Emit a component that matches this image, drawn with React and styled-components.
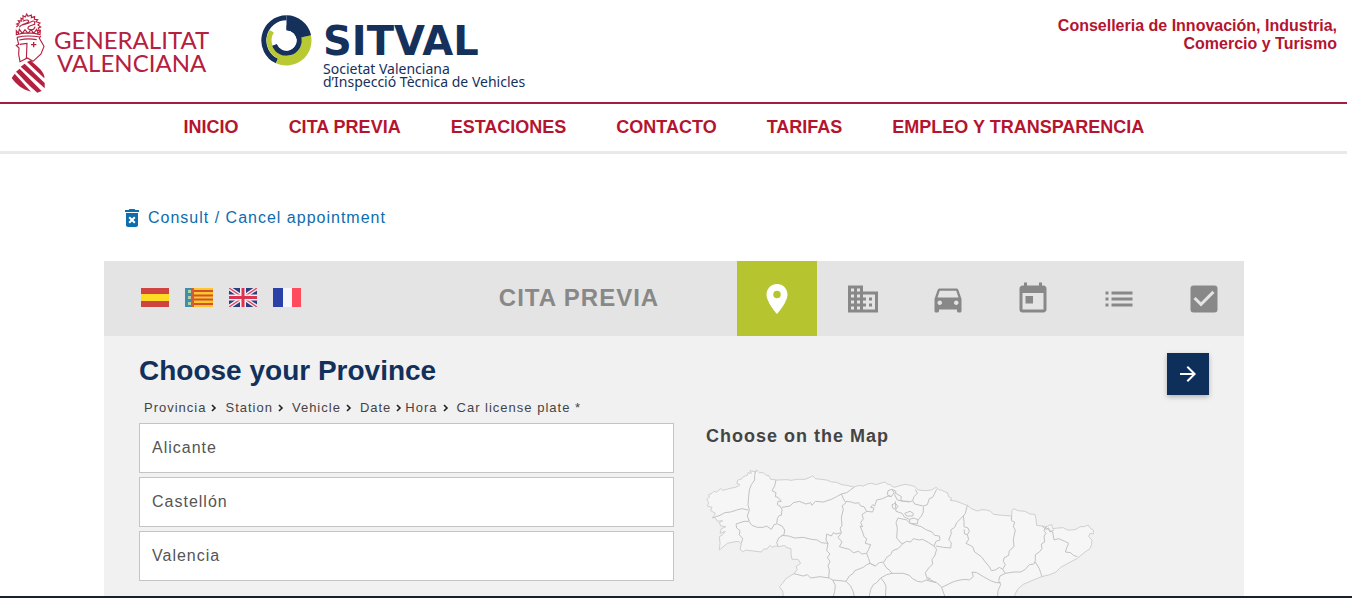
import styled, { createGlobalStyle } from "styled-components"
import {
    MdArrowForward,
    MdBusiness,
    MdCheckBox,
    MdDeleteForever,
    MdDirectionsCar,
    MdList,
    MdLocationOn,
    MdToday,
} from "react-icons/md"

const GlobalStyle = createGlobalStyle`
    * {
        box-sizing: border-box;
    }
    body {
        margin: 0;
        background: #fff;
        font-family: "Liberation Sans", Arial, sans-serif;
    }
    h1, h2, h3, p, ul, ol {
        margin: 0;
        padding: 0;
    }
    ul, ol {
        list-style: none;
    }
    svg {
        display: block;
    }
`

const Screen = styled.div`
    display: flex;
    flex-direction: column;
    height: 100vh;
`

// everything scrolls above the dark bar
const Scroller = styled.div`
    flex: 1;
    min-height: 0;
    overflow-y: auto;
    scrollbar-width: none;
    padding-right: 5px;
`

const BottomBar = styled.footer`
    height: 2px;
    background: #16202f;
`

const Header = styled.header`
    display: flex;
    align-items: flex-start;
    height: 104px;
    padding: 12px 10px 0 11px;
    border-bottom: 2px solid #a71d3f;
`

const GvaLogo = styled.a`
    display: flex;
    gap: 8px;
    width: 250px;
    color: #b5203f;
    text-decoration: none;
`

const GvaName = styled.span`
    padding-top: 16px;
    font-family: Lato, sans-serif;
    font-size: 24px;
    line-height: 23px;
    text-align: center;
    white-space: nowrap;
`

const SitvalLogo = styled.a`
    display: flex;
    gap: 11px;
    padding-top: 3px;
    color: #16305c;
    text-decoration: none;
    white-space: nowrap;
`

const SitvalName = styled.span`
    display: block;
    padding-top: 5px;
    font-family: "DejaVu Sans", sans-serif;
    font-size: 40px;
    line-height: 42px;
    font-weight: bold;
`

const SitvalText = styled.span`
    display: block;
    font-family: "Noto Sans", sans-serif;
    font-size: 14px;
    line-height: 13px;
`

const Department = styled.p`
    width: 300px;
    margin-left: auto;
    padding-top: 5px;
    color: #b5142f;
    font-size: 16px;
    font-weight: bold;
    line-height: 18px;
    text-align: right;
`

const Nav = styled.nav`
    height: 50px;
    padding-right: 19px;
    border-bottom: 3px solid #e9e9e9;

    ul {
        display: flex;
        justify-content: center;
        gap: 50px;
    }
`

const NavLink = styled.a`
    color: #b5142f;
    font-size: 18px;
    font-weight: bold;
    line-height: 46px;
    text-decoration: none;
`

const Main = styled.main`
    max-width: 1141px;
    margin: 0 auto;
    padding: 52px 0 0 1px;
    letter-spacing: 1px;
`

const CancelLink = styled.a`
    display: inline-flex;
    align-items: center;
    gap: 4px;
    padding-left: 16px;
    color: #0d6dae;
    font-size: 16px;
    line-height: 24px;
    text-decoration: none;
`

const Panel = styled.section`
    margin-top: 27px;
    background: #f1f1f1;
`

const PanelHead = styled.div`
    display: grid;
    grid-template-columns: 5fr 5fr 8fr;
    align-items: center;
    height: 75px;
    background: #e4e4e4;
`

const Flags = styled.div`
    display: flex;
    gap: 16px;
    padding-left: 37px;
    padding-bottom: 2px;
`

const FlagButton = styled.button`
    width: 28px;
    height: 19px;
    padding: 0;
    border: 0;
    background: none;
    cursor: pointer;
`

const PanelTitle = styled.h1`
    padding-bottom: 2px;
    color: #888;
    font-size: 24px;
    line-height: 28px;
    text-align: center;
`

const Steps = styled.ol`
    display: flex;
    justify-content: space-between;
`

const Step = styled.button`
    display: flex;
    align-items: center;
    justify-content: center;
    width: 80px;
    height: 75px;
    padding: 0;
    border: 0;
    color: ${(props) => (props.$active ? "#fff" : "#888")};
    background: ${(props) => (props.$active ? "#b6c52f" : "transparent")};
    cursor: pointer;
`

const PanelBody = styled.div`
    padding: 17px 35px 40px;
`

const TitleRow = styled.div`
    display: flex;
    align-items: flex-start;
    justify-content: space-between;
`

const StepTitle = styled.h2`
    color: #12305c;
    font-size: 28px;
    line-height: 36px;
    letter-spacing: normal;
`

const NextButton = styled.button`
    display: flex;
    align-items: center;
    justify-content: center;
    width: 42px;
    height: 42px;
    padding: 0;
    border: 0;
    color: #fff;
    background: #0f2f5b;
    box-shadow: 0 2px 5px rgba(0, 0, 0, 0.26);
    cursor: pointer;
`

const Columns = styled.div`
    display: grid;
    grid-template-columns: 1fr 1fr;
`

const Crumbs = styled.ol`
    display: flex;
    padding: 4px 5px 7px;
    color: #444;
    font-size: 13px;
    line-height: 17px;
    white-space: nowrap;

    li {
        display: flex;
        align-items: center;
        margin-right: 5px;
    }
    li:nth-child(4) {
        margin-right: 0;
    }
    svg {
        margin-left: 2px;
    }
`

const Provinces = styled.ul`
    display: grid;
    gap: 4px;
`

const Province = styled.button`
    width: 100%;
    height: 50px;
    padding: 0 12px;
    border: 1px solid #c4c4c4;
    color: #555;
    background: #fff;
    font: inherit;
    font-size: 16px;
    letter-spacing: inherit;
    text-align: left;
    cursor: pointer;
`

const MapColumn = styled.div`
    padding: 30px 0 0 32px;
`

const MapTitle = styled.h3`
    margin-bottom: 21px;
    color: #444;
    font-size: 18px;
    line-height: 22px;
`

function Crest() {
    return (
        <svg width="35" height="81" viewBox="31 34 105 243" fill="none" stroke="#b5203f" strokeWidth="3.4">
            <path d="M47 79l7-6-6-3 9-4-4-6 9 1-1-8 6 3 0-11 7 4 4-9 4 7 10-4 0 8 10-3-1 8 10 1-5 6 12 4-6 6 8 6-7 3 3 8-7 0" />
            <path d="M56 80c8-15 30-9 28-19-3-6-12-2-18 1M65 73c10-5 16-1 27-10 8-5 11 0 10 8l-13 4c-9 3-10 11-1 12 9 2 14-2 15-9" />
            <path d="M47 102v-12l6 8 3-12 9 12 8-11 9 11 9-11 8 11 9-12 4 12 7-8-1 12c-20-7-50-7-71 0z" />
            <path d="M49 110l5 21-7 3 8 8-1 19 4 22 22-11 17 10 24-22 9-23-14-24 4-7" />
            <path d="M57 131l22-3-2 47M49 110c20-5 46-5 68-1" />
            <path d="M56 118c18-4 36-4 52-1" />
            <path d="M99 124v16M91 132h16" strokeWidth="4" />
            <g fill="#b5203f" stroke="none">
                <path d="M79 184l11-5c15 16 34 26 41 47v7z" />
                <path d="M60 198l12-9 60 58v16z" />
                <path d="M46 213l11-9 66 67-13 5c-25-21-44-43-64-63z" />
                <path d="M33 232l9-13 49 54c-25-6-43-20-58-41z" />
            </g>
        </svg>
    )
}

function SitvalMark() {
    return (
        <svg width="51" height="51" viewBox="63 44 152 152" fill="none">
            <path d="M110.500 181.200A67.500 67.500 0 0 1 139 52.500" stroke="#16305c" strokeWidth="15" />
            <path d="M197.700 107.500A60 60 0 0 1 113.600 174.400" stroke="#b9c932" strokeWidth="29" />
            <path d="M125.500 170.200A52 52 0 0 1 94.900 92.400" stroke="#b9c932" strokeWidth="15" />
            <path d="M139 67.500A52.500 52.500 0 0 1 190.400 109.100" stroke="#16305c" strokeWidth="45" />
            <path d="M139 82A38 38 0 1 1 103.300 133" stroke="#16305c" strokeWidth="15" />
            <circle cx="139" cy="120" r="30" fill="#fff" />
        </svg>
    )
}

function SpainFlag() {
    return (
        <svg viewBox="0 0 28 19">
            <path fill="#cf4440" d="M0 0h28v19H0z" />
            <path fill="#ffdb25" d="M0 6h28v7H0z" />
        </svg>
    )
}

function ValenciaFlag() {
    return (
        <svg viewBox="0 0 28 19">
            <path fill="#ffc72e" d="M0 0h28v19H0z" />
            <path stroke="#d0502f" strokeWidth="2" d="M8 3h20M8 7.500h20M8 11.500h20M8 16h20" />
            <path fill="#3c8fae" d="M0 0h8v19H0z" />
            <path fill="#c9603a" d="M7 0h2v19H7z" />
            <path fill="#b9cf9c" d="M3 2h3v3H3zM3 8h3v3H3zM3 14h3v3H3z" />
        </svg>
    )
}

function UkFlag() {
    return (
        <svg viewBox="0 0 28 19">
            <path fill="#2b3f7e" d="M0 0h28v19H0z" />
            <path stroke="#f6eef2" strokeWidth="4" d="M0 0l28 19M28 0L0 19" />
            <path stroke="#dc4a63" strokeWidth="1.400" d="M0 0l28 19M28 0L0 19" />
            <path stroke="#f6eef2" strokeWidth="6" d="M14 0v19M0 9.500h28" />
            <path stroke="#d93550" strokeWidth="3" d="M14 0v19M0 9.500h28" />
        </svg>
    )
}

function FranceFlag() {
    return (
        <svg viewBox="0 0 28 19">
            <path fill="#f7f7fb" d="M0 0h28v19H0z" />
            <path fill="#2c41a8" d="M0 0h10v19H0z" />
            <path fill="#ff4b5c" d="M19 0h9v19h-9z" />
        </svg>
    )
}

function Chevron() {
    return (
        <svg width="12" height="12" viewBox="0 0 12 12" fill="none" stroke="#222" strokeWidth="1.600">
            <path d="M4 3l3 3-3 3" />
        </svg>
    )
}

const coast =
    "M88 422L90 402L88 382L98 376L106 366L90 372L94 358L108 352L92 350L88 340L98 334L82 336L76 326L70 322L76 312L62 304L66 294L52 290L56 280L50 270L58 264L56 256L66 252L72 246L80 248L92 238L98 243L110 240L125 236L136 234L145 230L150 226L140 222L144 212L156 208L160 202L172 198L174 190L184 192L180 184L197 188L200 182L208 190L220 190L228 198L236 198L242 210L262 212L290 211L304 213L320 210L345 210L360 204L368 199L376 208L392 210L410 212L425 218L440 219L455 226L470 228L492 233L508 228L520 230L532 224L545 222L560 226L570 222L585 218L592 224L600 226L612 234L626 230L645 225L662 228L675 232L685 242L706 244L725 242L734 236L740 235L748 242L755 242L764 247L772 250L776 262L786 268L780 273L800 276L820 284L832 288L844 298L862 305L876 301L890 302L902 306L910 315L938 318L965 320L966 304L970 298L984 304L1005 306L1020 314L1035 315L1038 330L1040 348L1055 350L1070 352L1085 345L1088 358L1104 356L1120 355L1132 362L1145 362L1158 360L1170 352L1182 352L1195 347L1200 356L1210 362L1210 374L1200 372L1196 382L1206 392L1205 405L1200 418L1185 428L1162 447L1134 462L1112 474L1098 488L1080 496L1055 502L1030 512L1000 525L985 537L975 555L970 620L280 620L280 562L278 545L268 532L278 522L286 510L300 500L312 493L322 480L318 472L332 462L324 450L306 450L303 434L303 418L288 414L284 408L268 412L256 410L246 414L240 408L232 418L220 420L214 428L190 425L166 422L160 428L150 420L154 404L146 396L130 398L112 402z"

// borders between the provinces
const borders = [
    "M197 184L194 198L194 212L184 226L178 242L176 262L174 286L178 302L172 320L178 336",
    "M66 326L90 318L104 310L122 308L140 302L156 298L174 302",
    "M178 336L162 336L150 340L138 344L140 356L150 364L148 376L158 388L154 402",
    "M178 338L186 348L202 354L220 354L230 350L244 360L252 346L260 344L262 328L268 318L274 318L276 300L270 290L262 286L264 276L274 276L264 264L256 262L258 250L246 244L254 230L258 212",
    "M276 294L300 290L310 280L328 276L348 284L362 280L366 288L376 276L400 278L424 270L440 262L454 254L470 250L478 244L492 234",
    "M454 254L462 272L468 280L456 290L460 300L454 324L456 350L450 356L454 370L438 374L430 370L424 380L410 374L408 392L414 402",
    "M262 344L276 350L284 362L282 376L266 386L260 400L264 410",
    "M274 378L296 380L314 386L340 384L364 390L382 392L394 400L414 402",
    "M414 402L410 424L420 434L412 444L420 456L414 470L418 482L416 506",
    "M312 493L340 500L352 496L362 506L390 502L418 506L428 512L450 514L468 516L478 500L490 492L494 484L520 474L530 466L540 462",
    "M454 372L444 384L456 398L448 412L462 416L478 420L490 430L506 426L516 434L530 432",
    "M468 276L484 278L496 282L506 280L512 290L522 292L530 306L548 308L552 296L542 294L548 286L554 290L560 272L578 268L594 260L604 262L612 250L606 240",
    "M530 306L516 316L520 328L512 340L518 352L510 350L518 368L522 382L530 388L526 402L542 406L536 420L530 432L536 448L540 462",
    "M540 462L556 470L568 460L582 458L590 444L602 436L608 424L624 418L634 408L640 402",
    "M540 462L556 470M580 460L588 474L600 484L606 492L590 496L572 506L560 520L550 526L542 540L536 570",
    "M572 506L582 518L588 530L586 570M428 512L436 528L434 546L428 570M468 516L482 530L490 548L494 570",
    "M606 492L640 492L658 498L668 508L682 516L696 518L708 512L722 516L738 520",
    "M606 240L594 244L592 256L604 262M606 240L618 246L614 256L622 272L640 276L658 276",
    "M618 252L634 262L632 274L658 278L668 274L672 262L682 252L676 240M668 274L674 284L700 290L712 286L718 268L728 264L740 240",
    "M616 280L612 284L606 286L608 296L616 300L624 292L618 284M616 276L618 306L636 312L644 324L658 330L672 326L684 332L694 320L700 308L700 292",
    "M644 312L660 306L670 312L668 320L650 320zM658 330L660 342L682 344L684 332",
    "M624 326L618 340L622 356L620 386L634 402L640 402L650 396L662 398L670 388L688 392L698 390L716 400L732 410L738 396L750 392L748 380L734 378L726 368L706 360L694 352L672 346L660 342L650 332L624 326",
    "M732 410L740 420L734 440L726 450L728 464L716 476L706 490L710 504L722 508M738 410L760 414L782 416L784 400L776 392L784 372L782 362L794 354L800 340L820 320L826 312L832 288",
    "M710 508L726 514L740 520L754 532L764 560M756 534L780 522L794 516L810 512L826 510L838 512L850 502L846 488L860 490L880 502L902 514L918 520L932 520",
    "M820 320L822 336L822 352L834 356L838 366L832 376L824 374L822 360M832 376L836 390L828 402L848 412L854 428L874 442L886 458L898 472L904 484L916 482L928 474L938 480",
    "M965 320L964 334L974 338L970 352L976 362L970 390L972 412L958 424L956 438L942 446L940 456L946 466L938 480L946 492L930 500L926 514L932 526L924 544L922 570",
    "M946 492L972 488L992 488L1006 480L1018 466L1032 464L1036 454L1036 436L1048 428L1056 418L1054 404L1064 398L1062 380L1068 372L1062 364L1068 352M1036 458L1048 478L1052 490L1056 502",
    "M1068 354L1076 362L1088 368L1090 380L1092 392L1106 388L1124 396L1136 402L1130 416L1126 428L1142 430L1150 438L1162 442M1056 350L1068 360L1076 356L1080 368L1092 362",
]

function ProvinceMap() {
    return (
        <svg
            width="390"
            height="150"
            viewBox="48 176 1170 450"
            fill="#f6f6f6"
            stroke="#c2c2c2"
            strokeWidth="3"
            strokeLinejoin="round"
            role="img"
            aria-label="Provinces"
        >
            <path d={coast} stroke="#d0d0d0" />
            {borders.map((d) => (
                <path key={d} d={d} fill="none" />
            ))}
        </svg>
    )
}

const navItems = ["INICIO", "CITA PREVIA", "ESTACIONES", "CONTACTO", "TARIFAS", "EMPLEO Y TRANSPARENCIA"]

const languages = [
    { name: "Español", Flag: SpainFlag },
    { name: "Valencià", Flag: ValenciaFlag },
    { name: "English", Flag: UkFlag },
    { name: "Français", Flag: FranceFlag },
]

const steps = [
    { name: "Province", Icon: MdLocationOn },
    { name: "Station", Icon: MdBusiness },
    { name: "Vehicle", Icon: MdDirectionsCar },
    { name: "Date", Icon: MdToday },
    { name: "Details", Icon: MdList },
    { name: "Confirm", Icon: MdCheckBox },
]

const crumbs = ["Provincia", "Station", "Vehicle", "Date", "Hora", "Car license plate *"]

const provinces = ["Alicante", "Castellón", "Valencia"]

function App() {
    return (
        <Screen>
            <GlobalStyle />
            <Scroller>
                <Header>
                    <GvaLogo href="#gva">
                        <Crest />
                        <GvaName>
                            GENERALITAT
                            <br />
                            VALENCIANA
                        </GvaName>
                    </GvaLogo>
                    <SitvalLogo href="#sitval">
                        <SitvalMark />
                        <span>
                            <SitvalName>SITVAL</SitvalName>
                            <SitvalText>Societat Valenciana</SitvalText>
                            <SitvalText>d’Inspecció Tècnica de Vehicles</SitvalText>
                        </span>
                    </SitvalLogo>
                    <Department>Conselleria de Innovación, Industria, Comercio y Turismo</Department>
                </Header>

                <Nav>
                    <ul>
                        {navItems.map((item) => (
                            <li key={item}>
                                <NavLink href="#">{item}</NavLink>
                            </li>
                        ))}
                    </ul>
                </Nav>

                <Main>
                    <CancelLink href="#cancel">
                        <MdDeleteForever size={24} />
                        Consult / Cancel appointment
                    </CancelLink>

                    <Panel>
                        <PanelHead>
                            <Flags>
                                {languages.map(({ name, Flag }) => (
                                    <FlagButton key={name} aria-label={name}>
                                        <Flag />
                                    </FlagButton>
                                ))}
                            </Flags>
                            <PanelTitle>CITA PREVIA</PanelTitle>
                            <Steps>
                                {steps.map(({ name, Icon }, i) => (
                                    <li key={name}>
                                        <Step $active={i === 0} aria-label={name}>
                                            <Icon size={36} />
                                        </Step>
                                    </li>
                                ))}
                            </Steps>
                        </PanelHead>

                        <PanelBody>
                            <TitleRow>
                                <StepTitle>Choose your Province</StepTitle>
                                <NextButton aria-label="Next">
                                    <MdArrowForward size={24} />
                                </NextButton>
                            </TitleRow>
                            <Columns>
                                <div>
                                    <Crumbs>
                                        {crumbs.map((crumb, i) => (
                                            <li key={crumb}>
                                                {crumb}
                                                {i < crumbs.length - 1 && <Chevron />}
                                            </li>
                                        ))}
                                    </Crumbs>
                                    <Provinces>
                                        {provinces.map((province) => (
                                            <li key={province}>
                                                <Province>{province}</Province>
                                            </li>
                                        ))}
                                    </Provinces>
                                </div>
                                <MapColumn>
                                    <MapTitle>Choose on the Map</MapTitle>
                                    <ProvinceMap />
                                </MapColumn>
                            </Columns>
                        </PanelBody>
                    </Panel>
                </Main>
            </Scroller>
            <BottomBar />
        </Screen>
    )
}

export default App
